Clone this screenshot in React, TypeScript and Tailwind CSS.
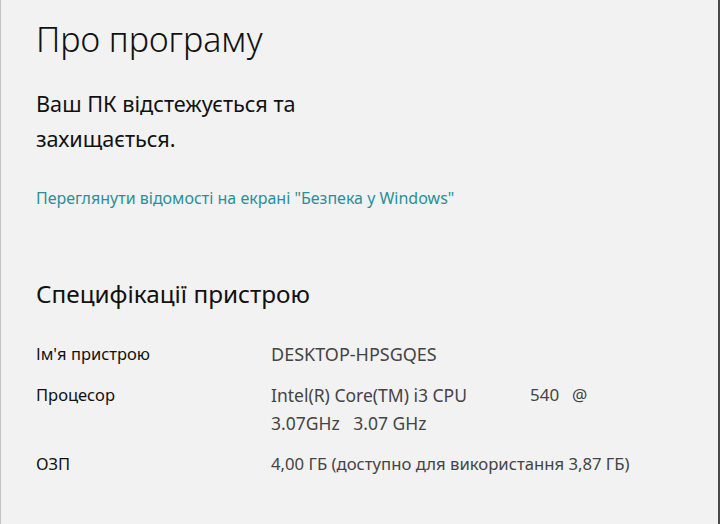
export default function App() {
  const font = { fontFamily: '"Noto Sans", "Open Sans", sans-serif' };
  return (
    <div className="w-[720px] h-[524px] bg-[#f2f2f2] border-l border-l-[#c4c4c4] border-r-2 border-r-[#4a4a4a] overflow-hidden" style={font}>
      <div className="pl-[35px] pt-[17px]">
        <h1 className="text-[34px] leading-[44px] font-light text-[#111]">Про програму</h1>
        <p className="mt-[25px] text-[21.7px] leading-[35px] text-[#111] w-[290px]">Ваш ПК відстежується та захищається.</p>
        <p className="mt-[31px] text-[16px] leading-[22px] text-[#2a8f98]">Переглянути відомості на екрані "Безпека у Windows"</p>
        <h2 className="mt-[69px] text-[24.3px] leading-[32px] text-[#111]">Специфікації пристрою</h2>
        <div className="mt-[30px] grid grid-cols-[235px_1fr] gap-y-[13px] text-[17px] leading-[28px]">
          <div className="text-[#111] text-[16.5px]">Ім'я пристрою</div>
          <div className="text-[#444] text-[18px]">DESKTOP-HPSGQES</div>
          <div className="text-[#111] text-[16.5px]">Процесор</div>
          <div className="text-[#444] w-[360px]">
            <div className="flex">
              <span className="w-[259px] text-[17.5px]">Intel(R) Core(TM) i3 CPU</span>
              <span className="w-[42px]">540</span>
              <span>@</span>
            </div>
            <div className="text-[17.5px]">3.07GHz&nbsp;&nbsp;&nbsp;3.07 GHz</div>
          </div>
          <div className="text-[#111] text-[16.5px]">ОЗП</div>
          <div className="text-[#444] text-[16.7px]">4,00 ГБ (доступно для використання 3,87 ГБ)</div>
        </div>
      </div>
    </div>
  );
}
